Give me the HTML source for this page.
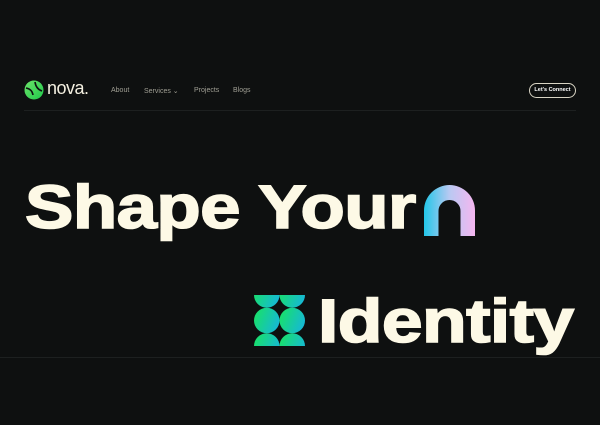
<!DOCTYPE html>
<html><head><style>
body{margin:0;width:600px;height:425px;background:#0e1010;overflow:hidden;font-family:"Liberation Sans",sans-serif;position:relative}
.a{position:absolute}
.nav{font-size:7px;color:#a09f94;top:87px}
.h{font-weight:bold;color:#fdf9e6;font-size:61px;transform-origin:0 0;white-space:nowrap;letter-spacing:-0.5px;-webkit-text-stroke:1.6px #fdf9e6}
</style></head><body>
<svg class="a" style="left:24px;top:80px" width="20" height="20" viewBox="0 0 20 20">
<defs><linearGradient id="g0" x1="0" y1="0" x2="1" y2="1"><stop offset="0" stop-color="#6de36a"/><stop offset="1" stop-color="#1fc94a"/></linearGradient></defs>
<circle cx="10" cy="10" r="9.5" fill="url(#g0)"/>
<path d="M2 8 Q8 9 9 15" stroke="#0e1010" stroke-width="1.6" fill="none"/>
<path d="M11 2 Q12 9 18 11" stroke="#0e1010" stroke-width="1.6" fill="none"/>
</svg>
<div class="a" style="left:47px;top:78px;font-size:18px;color:#f3efe0;letter-spacing:-0.5px">nova.</div>
<div class="a nav" style="left:111px">About</div>
<div class="a nav" style="left:144px">Services ⌄</div>
<div class="a nav" style="left:194px">Projects</div>
<div class="a nav" style="left:233px">Blogs</div>
<div class="a" style="left:529px;top:83px;width:47px;height:15px;border:1px solid #d8d4c4;border-radius:8px;box-sizing:border-box;color:#fff;font-size:5.5px;font-weight:bold;text-align:center;line-height:13px">Let's Connect</div>
<div class="a" style="left:24px;top:110px;width:552px;height:1px;background:#1d2020"></div>
<div class="a" style="left:0;top:357px;width:600px;height:1px;background:#1d2020"></div>
<div class="a h" style="left:25px;top:172px;transform:scaleX(1.19)">Shape Your</div>
<svg class="a" style="left:424px;top:185px" width="51" height="51" viewBox="0 0 51 51">
<defs><linearGradient id="g1" x1="0" x2="1"><stop offset="0" stop-color="#22c6e8"/><stop offset="0.5" stop-color="#b9c9f2"/><stop offset="1" stop-color="#f5b6f0"/></linearGradient></defs>
<path d="M0 51V25.5A25.5 25.5 0 0 1 51 25.5V51H36V26A10.5 10.5 0 0 0 15 26V51Z" fill="url(#g1)"/>
<path d="M16 51V26A9.5 9.5 0 0 1 35 26V51" stroke="#0e1010" stroke-width="3" fill="none"/>
</svg>
<svg class="a" style="left:254px;top:295px" width="51" height="51" viewBox="0 0 51 51">
<defs><linearGradient id="g2" x1="0" y1="0.3" x2="1" y2="0.7"><stop offset="0" stop-color="#18e06a"/><stop offset="1" stop-color="#16b7d9"/></linearGradient>
<clipPath id="c"><rect width="51" height="51"/></clipPath></defs>
<g fill="url(#g2)" clip-path="url(#c)">
<circle cx="12.75" cy="0" r="12.75"/><circle cx="38.25" cy="0" r="12.75"/>
<circle cx="12.75" cy="25.5" r="12.75"/><circle cx="38.25" cy="25.5" r="12.75"/>
<circle cx="12.75" cy="51" r="12.75"/><circle cx="38.25" cy="51" r="12.75"/>
</g></svg>
<div class="a h" style="left:318px;top:286px;transform:scaleX(1.2)">Identity</div>
</body></html>
